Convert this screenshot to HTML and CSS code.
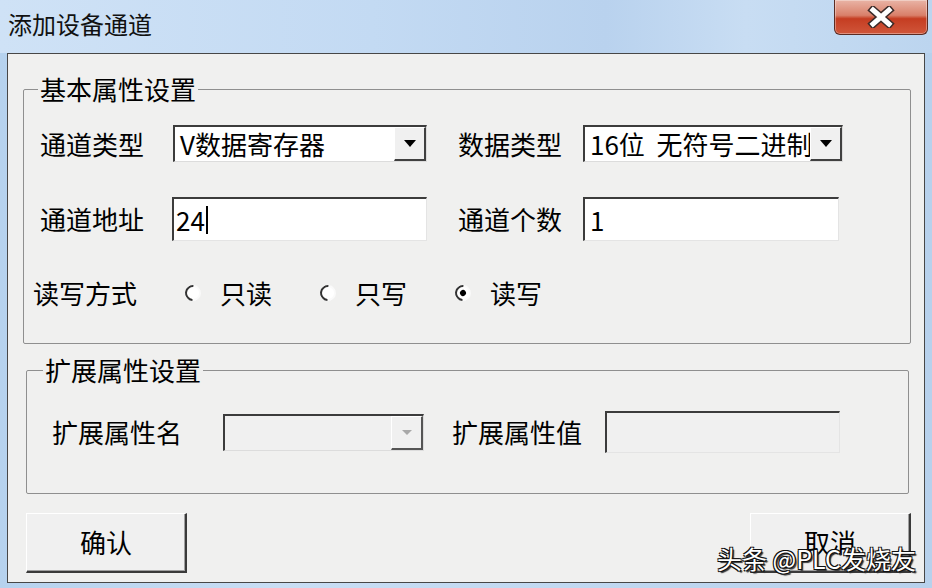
FILE: index.html
```html
<!doctype html>
<html>
  <head>
    <title>添加设备通道</title>
    <link rel="stylesheet" href="styles.css">
  </head>

  <body>
    <div class="window">
      <div class="titlebar">
        <div class="title">添加设备通道</div>
        <div class="close">
          <svg width="30" height="22" viewBox="0 0 30 22">
            <path d="M7 4 L23 18 M23 4 L7 18" stroke="#3a2a28" stroke-width="8" stroke-linecap="square" />
            <path d="M7 4 L23 18 M23 4 L7 18" stroke="#fff" stroke-width="5" stroke-linecap="square" />
          </svg>
        </div>
      </div>

      <div class="client">
        <fieldset class="group group_basic">
          <legend>基本属性设置</legend>
          <div class="rows">
            <div class="row row_type">
              <div class="label label_a">通道类型</div>
              <div class="combo combo_a">
                <span class="combo_text">V数据寄存器</span>
                <span class="combo_btn"><span class="arrow"></span></span>
              </div>
              <div class="label label_b">数据类型</div>
              <div class="combo combo_b">
                <span class="combo_text">16位  无符号二进制</span>
                <span class="combo_btn"><span class="arrow"></span></span>
              </div>
            </div>
            <div class="row row_addr">
              <div class="label label_a2">通道地址</div>
              <div class="edit edit_a">24<span class="caret"></span></div>
              <div class="label label_b">通道个数</div>
              <div class="edit edit_b">1</div>
            </div>
            <div class="row row_mode">
              <div class="label label_mode">读写方式</div>
              <label class="radio"><span class="dot"></span>只读</label>
              <label class="radio"><span class="dot"></span>只写</label>
              <label class="radio"><span class="dot checked"></span>读写</label>
            </div>
          </div>
        </fieldset>

        <fieldset class="group group_ext">
          <legend>扩展属性设置</legend>
          <div class="rows rows_ext">
            <div class="row row_ext">
              <div class="label label_ext">扩展属性名</div>
              <div class="combo combo_off">
                <span class="combo_text"></span>
                <span class="combo_btn btn_off"><span class="arrow arrow_off"></span></span>
              </div>
              <div class="label label_ext2">扩展属性值</div>
              <div class="edit edit_off"></div>
            </div>
          </div>
        </fieldset>

        <div class="buttons">
          <div class="button">确认</div>
          <div class="button">取消</div>
        </div>
      </div>

      <div class="watermark">头条 @PLC发烧友</div>
    </div>
  </body>
</html>
```

FILE: styles.css
```css
body {
  margin: 0;
  font-family: "Noto Sans CJK SC", "Noto Sans", sans-serif;
  color: #000;
}

.window {
  position: relative;
  width: 932px;
  height: 588px;
  display: flex;
  flex-direction: column;
  overflow: hidden;
  background: linear-gradient(90deg, #b6d2ee 0%, #c9def4 30%, #c2d9f1 60%, #b7d1ec 100%);
}

.titlebar {
  height: 53px;
  display: flex;
  justify-content: space-between;
  align-items: flex-start;
  background: linear-gradient(90deg, #cfe2f6 0%, #c3daf3 40%, #b9d2ee 65%, #c8ddf3 80%, #bcd5ef 100%);
}

.title {
  margin: 12px 0 0 8px;
  font-size: 24px;
  line-height: 24px;
  color: #111;
}

.close {
  width: 94px;
  height: 35px;
  margin-right: 4px;
  box-sizing: border-box;
  border: 1px solid #5b2b22;
  border-top: none;
  border-radius: 0 0 6px 6px;
  background: linear-gradient(180deg, #e9b4a6 0%, #d9806a 45%, #c53d22 55%, #d0563a 100%);
  box-shadow: inset 0 0 0 1px rgba(255, 255, 255, 0.35);
  display: flex;
  justify-content: center;
  align-items: center;
}

.client {
  height: 530px;
  margin: 0 7px 5px 7px;
  box-sizing: border-box;
  border: 1px solid #474747;
  background-color: #f0f0ef;
  display: flex;
  flex-direction: column;
}

.group {
  box-sizing: border-box;
  padding: 0;
  margin: 0;
  border: 1px solid #8f8f8f;
  border-radius: 2px;
}

.group legend {
  font-size: 26px;
  line-height: 30px;
  padding: 0 2px;
}

.group_basic {
  margin: 20px 0 0 15px;
  width: 888px;
  height: 270px;
}

.group_basic legend {
  margin-left: 14px;
}

.group_ext {
  margin: 11px 0 0 18px;
  width: 883px;
  height: 139px;
}

.group_ext legend {
  margin-left: 16px;
}

.rows {
  padding: 21px 0 0 16px;
}

.rows_ext {
  padding: 26px 0 0 25px;
}

.row {
  display: flex;
  align-items: center;
}

.label {
  font-size: 26px;
  line-height: 30px;
  white-space: nowrap;
}

.label_a {
  width: 133px;
}

.label_a2 {
  width: 132px;
}

.label_b {
  width: 125px;
  margin-left: 31px;
}

.row_type {
  height: 37px;
}

.row_addr {
  height: 44px;
  margin-top: 35px;
}

.row_mode {
  height: 30px;
  margin-top: 37px;
}

.label_mode {
  width: 152px;
  margin-left: -7px;
}

.combo {
  height: 37px;
  box-sizing: border-box;
  display: flex;
  align-items: stretch;
  background-color: #fff;
  border-style: solid;
  border-width: 2px 1px 1px 2px;
  border-color: #3c3c3c #dcdcdc #dcdcdc #3c3c3c;
  overflow: hidden;
}

.combo_a {
  width: 254px;
}

.combo_b {
  width: 260px;
}

.combo_text {
  flex: 1;
  font-size: 26px;
  line-height: 33px;
  padding-left: 5px;
  white-space: pre;
  overflow: hidden;
}

.combo_btn {
  width: 32px;
  flex: none;
  box-sizing: border-box;
  background-color: #f0f0f0;
  border-right: 2px solid #404040;
  border-bottom: 2px solid #404040;
  border-top: 1px solid #fff;
  border-left: 1px solid #fff;
  display: flex;
  justify-content: center;
  align-items: center;
}

.arrow {
  width: 0;
  height: 0;
  border-left: 6px solid transparent;
  border-right: 6px solid transparent;
  border-top: 7px solid #000;
}

.edit {
  box-sizing: border-box;
  height: 44px;
  background-color: #fff;
  border-style: solid;
  border-width: 2px 1px 1px 2px;
  border-color: #3c3c3c #e4e4e4 #e4e4e4 #3c3c3c;
  font-size: 26px;
  line-height: 38px;
  padding-left: 2px;
  display: flex;
  align-items: center;
}

.edit_a {
  width: 255px;
}

.edit_b {
  width: 256px;
  padding-left: 5px;
}

.caret {
  width: 2px;
  height: 28px;
  margin-left: 1px;
  background-color: #000;
}

.radio {
  width: 135px;
  display: flex;
  align-items: center;
  font-size: 26px;
  line-height: 30px;
}

.dot {
  width: 16px;
  height: 16px;
  flex: none;
  box-sizing: border-box;
  margin-right: 19px;
  border-radius: 50%;
  border: 2px solid;
  border-color: #333 #fafafa #fafafa #333;
  transform: rotate(-40deg);
  background-color: #fff;
  display: flex;
  justify-content: center;
  align-items: center;
}

.dot.checked::after {
  content: "";
  width: 6px;
  height: 6px;
  border-radius: 50%;
  background-color: #000;
}

.label_ext {
  width: 171px;
}

.label_ext2 {
  width: 153px;
  margin-left: 28px;
}

.combo_off {
  width: 201px;
  background-color: #f0f0f0;
}

.btn_off {
  border-right-color: #555;
  border-bottom-color: #555;
}

.arrow_off {
  border-left-width: 5px;
  border-right-width: 5px;
  border-top: 5px solid #a8a8a8;
}

.edit_off {
  width: 235px;
  height: 42px;
  background-color: #f0f0f0;
}

.buttons {
  display: flex;
  justify-content: space-between;
  padding: 0 13px 0 18px;
  margin-top: 19px;
}

.button {
  width: 161px;
  height: 60px;
  box-sizing: border-box;
  border-style: solid;
  border-width: 1px 2px 2px 1px;
  border-color: #fff #3a3a3a #3a3a3a #fff;
  box-shadow: inset -1px -1px 0 #a0a0a0;
  background-color: #f0f0f0;
  font-size: 26px;
  line-height: 56px;
  text-align: center;
}

.watermark {
  position: absolute;
  left: 717px;
  top: 538px;
  font-size: 25px;
  line-height: 40px;
  color: #fff;
  white-space: nowrap;
  text-shadow:
    -1px -1px 0 #111,
    1px -1px 0 #111,
    -1px 1px 0 #111,
    1px 1px 0 #111,
    2px 2px 1px #333;
}
```
